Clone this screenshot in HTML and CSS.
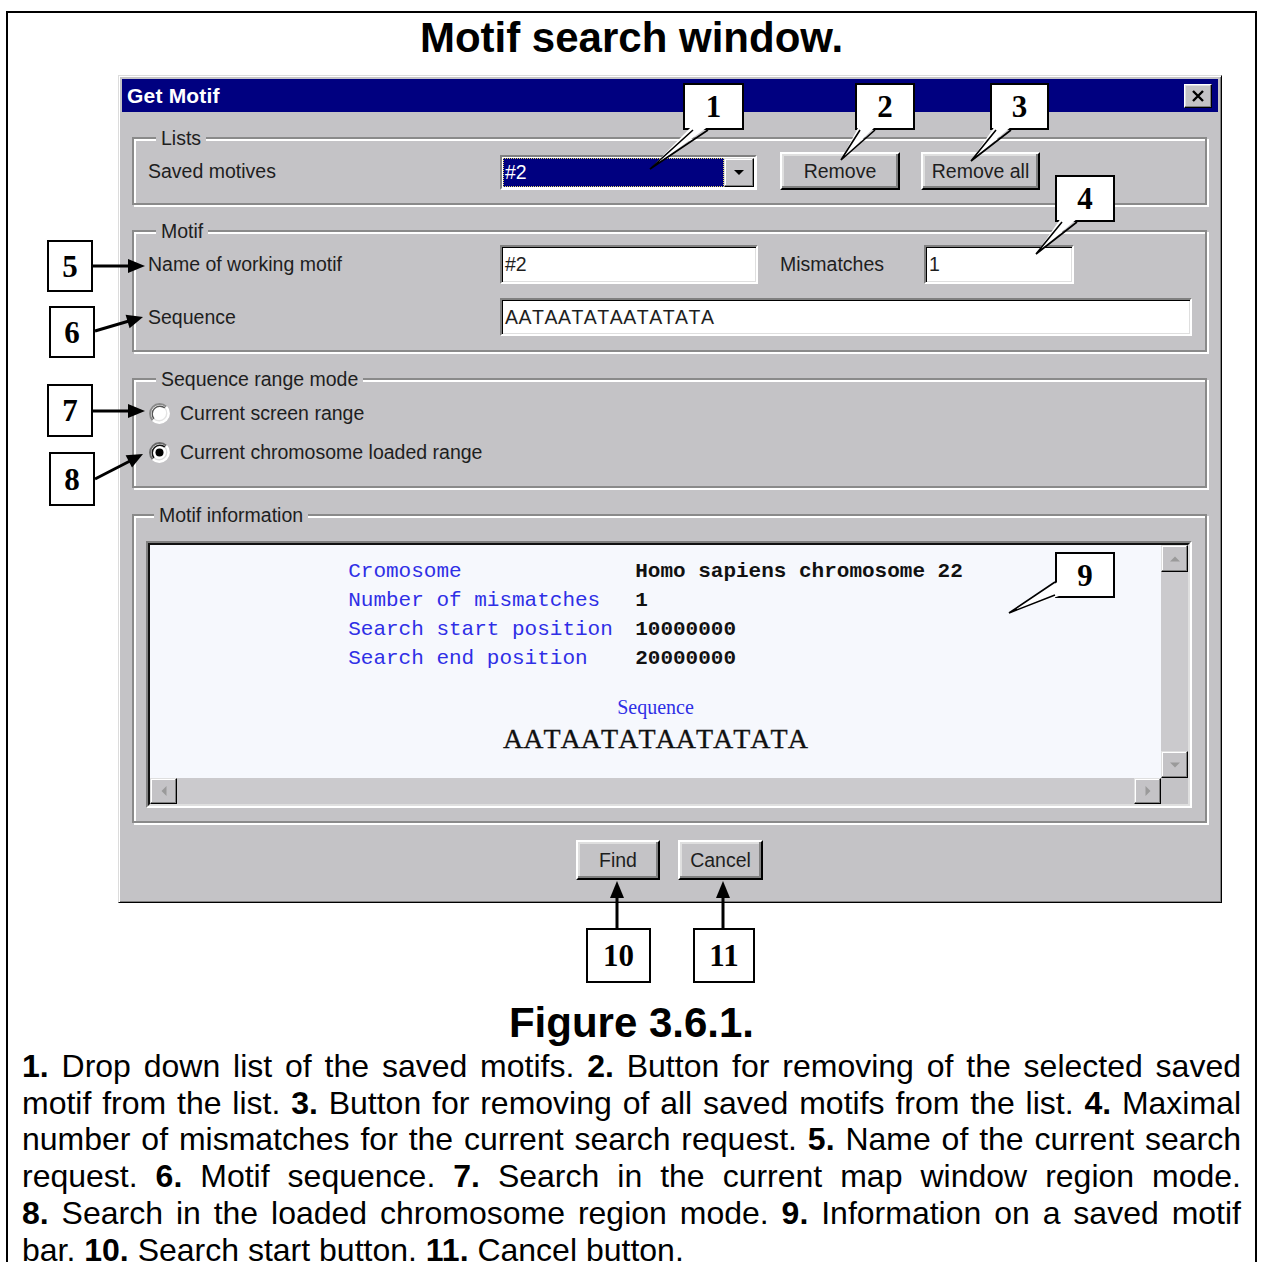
FILE: index.html
```html
<!DOCTYPE html>
<html lang="en">
<head>
<meta charset="utf-8">
<title>Motif search window</title>
<link rel="stylesheet" href="styles.css">
</head>
<body>
<div class="page">
  <h1 class="heading">Motif search window.</h1>

  <div class="dialog">
    <div class="titlebar">
      <span class="titlebar-text">Get Motif</span>
      <span class="close-btn">
        <svg width="14" height="12" viewBox="0 0 14 12"><path d="M2 1 L12 11 M12 1 L2 11" stroke="#000" stroke-width="2.4" fill="none"/></svg>
      </span>
    </div>

    <div class="dialog-body">
      <fieldset class="group group-lists">
        <legend>Lists</legend>
        <div class="row row-lists">
          <span class="lbl">Saved motives</span>
          <div class="combo">
            <span class="combo-field">#2</span>
            <span class="combo-btn"><svg width="10" height="6" viewBox="0 0 10 6"><path d="M0 0H10L5 5Z" fill="#000"/></svg></span>
          </div>
          <span class="btn btn-remove">Remove</span>
          <span class="btn btn-remove-all">Remove all</span>
        </div>
      </fieldset>

      <fieldset class="group group-motif">
        <legend>Motif</legend>
        <div class="row row-name">
          <span class="lbl">Name of working motif</span>
          <span class="field field-name">#2</span>
          <span class="lbl-mis">Mismatches</span>
          <span class="field field-mis">1</span>
        </div>
        <div class="row row-seq">
          <span class="lbl">Sequence</span>
          <span class="field field-seq">AATAATATAATATATA</span>
        </div>
      </fieldset>

      <fieldset class="group group-range">
        <legend>Sequence range mode</legend>
        <div class="radio-row">
          <svg class="radio" viewBox="0 0 24 24"><circle cx="12" cy="12" r="10" fill="#fff"/><path d="M4.93 19.07A10 10 0 0 1 19.07 4.93" stroke="#8a8a8a" stroke-width="2" fill="none"/><path d="M19.07 4.93A10 10 0 0 1 4.93 19.07" stroke="#fff" stroke-width="2" fill="none"/><path d="M6.36 17.64A8 8 0 0 1 17.64 6.36" stroke="#555" stroke-width="1.4" fill="none"/><path d="M17.64 6.36A8 8 0 0 1 6.36 17.64" stroke="#e4e4e4" stroke-width="1.4" fill="none"/></svg>
          <span>Current screen range</span>
        </div>
        <div class="radio-row">
          <svg class="radio" viewBox="0 0 24 24"><circle cx="12" cy="12" r="10" fill="#fff"/><path d="M4.93 19.07A10 10 0 0 1 19.07 4.93" stroke="#6a6a6a" stroke-width="2" fill="none"/><path d="M19.07 4.93A10 10 0 0 1 4.93 19.07" stroke="#fff" stroke-width="2" fill="none"/><path d="M6.36 17.64A8 8 0 0 1 17.64 6.36" stroke="#111" stroke-width="1.6" fill="none"/><path d="M17.64 6.36A8 8 0 0 1 6.36 17.64" stroke="#dcdcdc" stroke-width="1.4" fill="none"/><circle cx="12" cy="12" r="4.2" fill="#000"/></svg>
          <span>Current chromosome loaded range</span>
        </div>
      </fieldset>

      <fieldset class="group group-info">
        <legend>Motif information</legend>
        <div class="listbox">
          <div class="listbox-inner">
            <div class="info">
              <div class="info-table">
                <span class="k">Cromosome</span><span class="v">Homo sapiens chromosome 22</span>
                <span class="k">Number of mismatches</span><span class="v">1</span>
                <span class="k">Search start position</span><span class="v">10000000</span>
                <span class="k">Search end position</span><span class="v">20000000</span>
              </div>
              <div class="seq-caption">Sequence</div>
              <div class="seq-value">AATAATATAATATATA</div>
            </div>
            <div class="vscroll">
              <span class="sb-btn"><svg width="10" height="6" viewBox="0 0 10 6"><path d="M0 5.5L5 0.5L10 5.5Z" fill="#9a9a9a"/></svg></span>
              <span class="sb-track"></span>
              <span class="sb-btn"><svg width="10" height="6" viewBox="0 0 10 6"><path d="M0 0.5L5 5.5L10 0.5Z" fill="#9a9a9a"/></svg></span>
            </div>
            <div class="hscroll">
              <span class="sb-btn"><svg width="6" height="10" viewBox="0 0 6 10"><path d="M5.5 0L0.5 5L5.5 10Z" fill="#9a9a9a"/></svg></span>
              <span class="sb-track"></span>
              <span class="sb-btn"><svg width="6" height="10" viewBox="0 0 6 10"><path d="M0.5 0L5.5 5L0.5 10Z" fill="#9a9a9a"/></svg></span>
            </div>
            <div class="sb-corner"></div>
          </div>
        </div>
      </fieldset>

      <div class="actions">
        <span class="btn btn-find">Find</span>
        <span class="btn btn-cancel">Cancel</span>
      </div>
    </div>
  </div>

  <h2 class="figure">Figure 3.6.1.</h2>
  <p class="caption">
    <span class="cl"><b>1.</b> Drop down list of the saved motifs. <b>2.</b> Button for removing of the selected saved</span>
    <span class="cl">motif from the list. <b>3.</b> Button for removing of all saved motifs from the list. <b>4.</b> Maximal</span>
    <span class="cl">number of mismatches for the current search request. <b>5.</b> Name of the current search</span>
    <span class="cl">request. <b>6.</b> Motif sequence. <b>7.</b> Search in the current map window region mode.</span>
    <span class="cl"><b>8.</b> Search in the loaded chromosome region mode. <b>9.</b> Information on a saved motif</span>
    <span class="cl cl-last">bar. <b>10.</b> Search start button. <b>11.</b> Cancel button.</span>
  </p>

  <div class="callouts">
    <div class="callout c1">1</div>
    <div class="callout c2">2</div>
    <div class="callout c3">3</div>
    <div class="callout c4">4</div>
    <div class="callout c5">5</div>
    <div class="callout c6">6</div>
    <div class="callout c7">7</div>
    <div class="callout c8">8</div>
    <div class="callout c9">9</div>
    <div class="callout c10">10</div>
    <div class="callout c11">11</div>
    <svg class="pointers" width="1262" height="1262" viewBox="0 0 1262 1262">
      <g fill="#fff">
        <polygon points="692,126 709,126 650,169"/>
        <polygon points="859,126 876,126 841,160"/>
        <polygon points="995,126 1012,126 971,161"/>
        <polygon points="1061,218 1078,218 1036,254"/>
        <polygon points="1059,581 1059,596 1009,613"/>
      </g>
      <g stroke="#000" stroke-width="1.6" fill="none" stroke-linejoin="miter">
        <path d="M693 130 L650 169 L708 130"/>
        <path d="M860 130 L841 160 L875 130"/>
        <path d="M996 130 L971 161 L1011 130"/>
        <path d="M1062 222 L1036 254 L1077 222"/>
        <path d="M1055 582 L1009 613 L1055 595"/>
      </g>
      <g stroke="#000" stroke-width="3" fill="none">
        <line x1="93" y1="266" x2="131" y2="266"/>
        <line x1="95" y1="331" x2="129" y2="321"/>
        <line x1="93" y1="411" x2="131" y2="411"/>
        <line x1="95" y1="479" x2="130" y2="461"/>
        <line x1="617" y1="928" x2="617" y2="895"/>
        <line x1="723" y1="928" x2="723" y2="895"/>
      </g>
      <g fill="#000">
        <polygon points="145,266 128,259 128,273"/>
        <polygon points="143,317 129.6,328.2 125.6,314.8"/>
        <polygon points="145,411 128,404 128,418"/>
        <polygon points="143,454 132,467.6 125.6,455.2"/>
        <polygon points="617,881 610,898 624,898"/>
        <polygon points="723,881 716,898 730,898"/>
      </g>
    </svg>
  </div>
</div>
</body>
</html>
```

FILE: styles.css
```css
* { box-sizing: border-box; }
html, body { margin: 0; padding: 0; background: #fff; }
body {
  width: 1262px;
  height: 1262px;
  overflow: hidden;
  font-family: "Liberation Sans", Arial, sans-serif;
  color: #000;
}

.page {
  position: relative;
  margin: 11px 5px 0 6px;
  height: 1251px;
  border: 2px solid #000;
  border-bottom: 0;
}

.heading {
  margin: 0;
  padding-top: 1px;
  font-size: 42px;
  line-height: 48px;
  font-weight: 700;
  text-align: center;
}

/* ---------- dialog window ---------- */
.dialog {
  margin: 13px 0 0 110px;
  width: 1104px;
  height: 828px;
  padding: 3px;
  background: #c4c3c6;
  border: 1px solid;
  border-color: #dcdcdc #000 #000 #dcdcdc;
  box-shadow: inset 1px 1px 0 #fff, inset -1px -1px 0 #808080;
  display: flex;
  flex-direction: column;
  font-kerning: none;
}

.titlebar {
  flex: none;
  height: 33px;
  background: #000080;
  display: flex;
  align-items: center;
  justify-content: space-between;
  padding: 0 6px 0 5px;
}
.titlebar-text {
  color: #fff;
  font-weight: 700;
  font-size: 21px;
  letter-spacing: 0.2px;
}
.close-btn {
  width: 28px;
  height: 24px;
  background: #c4c3c6;
  border: 1px solid;
  border-color: #fff #000 #000 #fff;
  box-shadow: inset -1px -1px 0 #808080, inset 1px 1px 0 #dfdfdf;
  display: flex;
  align-items: center;
  justify-content: center;
}

.dialog-body {
  flex: 1;
  padding: 15px 11px 0 10px;
  display: flex;
  flex-direction: column;
  font-size: 19.5px;
  color: #1e1e1e;
}

/* group boxes */
.group {
  margin: 0;
  min-width: 0;
  border: 2px solid #8a8a8a;
  box-shadow: inset 2px 2px 0 #fff, 2px 2px 0 #fff;
}
.group legend {
  margin-left: 8px;
  padding: 0 5px;
  font-size: 19.5px;
  line-height: 22px;
  color: #1e1e1e;
  background: #c4c3c6;
}
.group-lists { padding: 3px 14px 13px; }
.group-motif { margin-top: 15px; padding: 3px 14px 14px; }
.group-range { margin-top: 16px; padding: 4px 14px 14px; }
.group-info { margin-top: 16px; padding: 15px 13px 13px 12px; }

.row { display: flex; align-items: center; }
.lbl { flex: none; width: 352px; }

/* lists row */
.row-lists { height: 38px; }
.combo {
  align-self: flex-end;
  flex: none;
  width: 257px;
  height: 35px;
  padding: 1px;
  background: #fff;
  border: 2px solid;
  border-color: #808080 #fff #fff #808080;
  display: flex;
}
.combo-field {
  flex: 1;
  background: #000080;
  color: #fff;
  outline: 1px dotted #e2d86a;
  outline-offset: -1px;
  padding-left: 2px;
  display: flex;
  align-items: center;
}
.combo-btn {
  flex: none;
  width: 30px;
  background: #c4c3c6;
  border: 1px solid;
  border-color: #dfdfdf #000 #000 #dfdfdf;
  box-shadow: inset -1px -1px 0 #808080, inset 1px 1px 0 #fff;
  display: flex;
  align-items: center;
  justify-content: center;
}

.btn {
  flex: none;
  height: 38px;
  display: flex;
  align-items: center;
  justify-content: center;
  background: #c4c3c6;
  border: 2px solid;
  border-color: #fff #000 #000 #fff;
  box-shadow: inset -2px -2px 0 #808080, inset 2px 2px 0 #dfdfdf;
  color: #1e1e1e;
}
.btn-remove { width: 120px; margin-left: 23px; }
.btn-remove-all { width: 119px; margin-left: 21px; }

/* motif rows */
.row-name { height: 39px; }
.row-seq { height: 38px; margin-top: 14px; }
.field {
  flex: none;
  height: 100%;
  display: flex;
  align-items: center;
  padding: 0 3px;
  background: #fff;
  border: 2px solid;
  border-color: #808080 #fff #fff #808080;
  box-shadow: inset 1px 1px 0 #000, inset -1px -1px 0 #dfdfdf;
}
.field-name { width: 258px; }
.lbl-mis { flex: none; width: 144px; margin-left: 22px; }
.field-mis { width: 150px; }
.field-seq { width: 692px; letter-spacing: 0.5px; }

/* radios */
.radio-row {
  height: 39px;
  display: flex;
  align-items: center;
  gap: 9px;
}
.radio { flex: none; width: 23px; height: 23px; }

/* motif information list box */
.listbox {
  height: 267px;
  border: 2px solid;
  border-color: #808080 #fff #fff #808080;
}
.listbox-inner {
  height: 100%;
  border: 2px solid;
  border-color: #111 #dfdfdf #dfdfdf #111;
  display: grid;
  grid-template-columns: 1fr 27px;
  grid-template-rows: 1fr 26px;
}
.info {
  background: #f6f8fd;
  padding-top: 12px;
  display: flex;
  flex-direction: column;
  align-items: center;
  overflow: hidden;
}
.info-table {
  display: grid;
  grid-template-columns: 287px auto;
  font-family: "Liberation Mono", "Courier New", monospace;
  font-size: 21px;
  line-height: 29px;
}
.k { color: #2f2fe6; }
.v { color: #111; font-weight: 700; }
.seq-caption {
  margin-top: 22px;
  font-family: "Liberation Serif", "Times New Roman", serif;
  font-size: 20px;
  line-height: 24px;
  color: #2f2fe6;
}
.seq-value {
  margin-top: 2px;
  font-family: "Liberation Serif", "Times New Roman", serif;
  font-size: 28px;
  line-height: 36px;
  color: #111;
  -webkit-text-stroke: 0.3px #111;
}

.vscroll { display: flex; flex-direction: column; background: #cbcacd; }
.hscroll { display: flex; background: #cbcacd; }
.sb-track { flex: 1; }
.sb-btn {
  flex: none;
  width: 27px;
  height: 27px;
  display: flex;
  align-items: center;
  justify-content: center;
  background: #c4c3c6;
  border: 1px solid;
  border-color: #dfdfdf #000 #000 #dfdfdf;
  box-shadow: inset -1px -1px 0 #808080, inset 1px 1px 0 #fff;
}
.hscroll .sb-btn { height: 26px; }
.sb-corner { background: #c4c3c6; }

.actions {
  margin-top: 17px;
  display: flex;
  justify-content: center;
  gap: 18px;
}
.btn-find { width: 84px; height: 40px; }
.btn-cancel { width: 85px; height: 40px; }

/* ---------- figure caption ---------- */
.figure {
  margin: 96px 0 0;
  font-size: 42px;
  line-height: 48px;
  font-weight: 700;
  text-align: center;
}
.caption {
  margin: 1px 0 0;
  padding: 0 14px;
  font-size: 32px;
  line-height: 36.7px;
}
.cl {
  display: block;
  text-align: justify;
  text-align-last: justify;
}
.cl-last { text-align-last: left; }

/* ---------- callouts ---------- */
.callouts {
  position: absolute;
  left: -8px;
  top: -13px;
  width: 1262px;
  height: 1262px;
  pointer-events: none;
}
.callout {
  position: absolute;
  display: flex;
  align-items: center;
  justify-content: center;
  background: #fff;
  border: 2px solid #000;
  font-family: "Liberation Serif", "Times New Roman", serif;
  font-weight: 700;
  font-size: 31px;
  line-height: 1;
  color: #000;
}
.c1 { left: 683px; top: 83px; width: 61px; height: 47px; }
.c2 { left: 855px; top: 83px; width: 60px; height: 47px; }
.c3 { left: 990px; top: 83px; width: 59px; height: 47px; }
.c4 { left: 1055px; top: 175px; width: 60px; height: 47px; }
.c5 { left: 47px; top: 240px; width: 46px; height: 52px; }
.c6 { left: 49px; top: 306px; width: 46px; height: 52px; }
.c7 { left: 47px; top: 384px; width: 46px; height: 53px; }
.c8 { left: 49px; top: 452px; width: 46px; height: 54px; }
.c9 { left: 1055px; top: 552px; width: 60px; height: 46px; }
.c10 { left: 586px; top: 928px; width: 65px; height: 55px; }
.c11 { left: 693px; top: 928px; width: 62px; height: 55px; }
.pointers { position: absolute; left: 0; top: 0; }
```
